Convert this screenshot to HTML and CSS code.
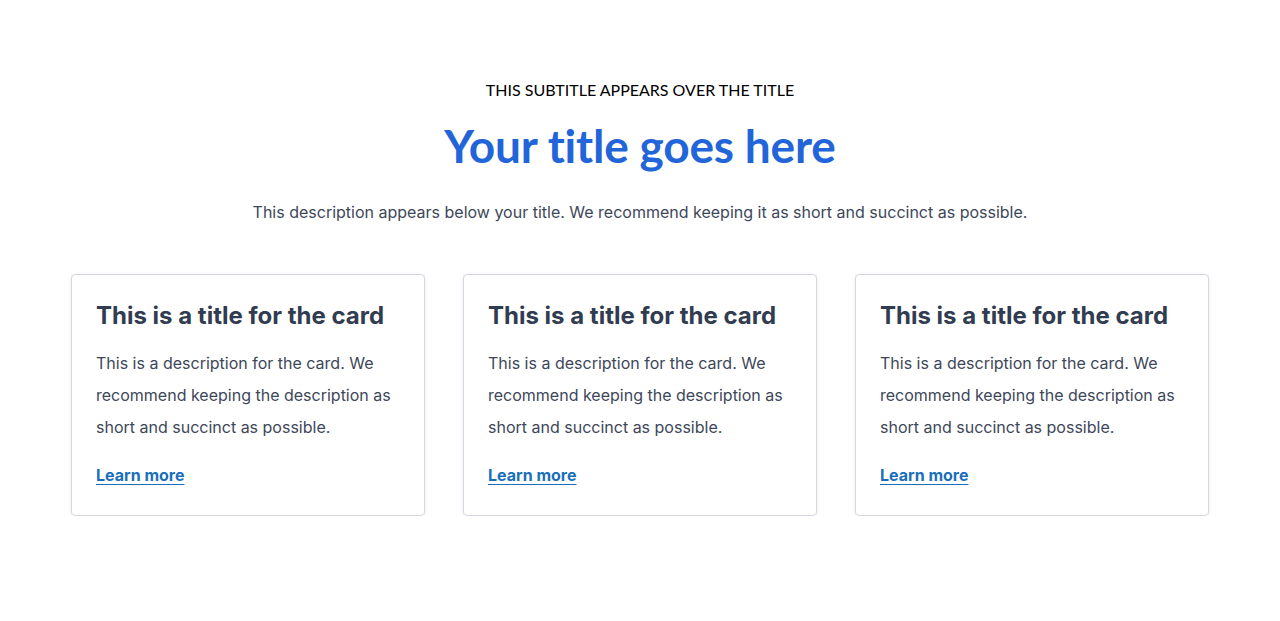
FILE: index.html
```html
<!DOCTYPE html>
<html>
<head>
<meta charset="utf-8">
<link rel="stylesheet" href="styles.css">
</head>
<body>
<section class="section">
  <header class="head">
    <p class="eyebrow">THIS SUBTITLE APPEARS OVER THE TITLE</p>
    <h1 class="title">Your title goes here</h1>
    <p class="lead">This description appears below your title. We recommend keeping it as short and succinct as possible.</p>
  </header>
  <div class="cards">
    <article class="card">
      <h2 class="card-title">This is a title for the card</h2>
      <p class="card-text">This is a description for the card. We recommend keeping the description as short and succinct as possible.</p>
      <a class="card-link" href="#">Learn more</a>
    </article>
    <article class="card">
      <h2 class="card-title">This is a title for the card</h2>
      <p class="card-text">This is a description for the card. We recommend keeping the description as short and succinct as possible.</p>
      <a class="card-link" href="#">Learn more</a>
    </article>
    <article class="card">
      <h2 class="card-title">This is a title for the card</h2>
      <p class="card-text">This is a description for the card. We recommend keeping the description as short and succinct as possible.</p>
      <a class="card-link" href="#">Learn more</a>
    </article>
  </div>
</section>
</body>
</html>
```
FILE: styles.css
```css
* { box-sizing: border-box; }
html, body { margin: 0; padding: 0; background: #fff; }
body { font-family: Inter, "Liberation Sans", sans-serif; color: #33415c; }
.section { padding: 80px 71px 0; }
.head { text-align: center; }
.eyebrow {
  margin: 0;
  font-family: Lato, sans-serif;
  font-size: 16px;
  line-height: 20px;
  color: #000;
  font-weight: 400;
}
.title {
  margin: 18px 0 0;
  font-family: Lato, sans-serif;
  font-weight: 700;
  font-size: 46px;
  line-height: 56px;
  color: #2265d9;
  letter-spacing: -0.2px;
}
.lead {
  margin: 26px 0 0;
  font-size: 16px;
  line-height: 24px;
  color: #3d4759;
}
.cards {
  margin-top: 50px;
  display: grid;
  grid-template-columns: repeat(3, 354px);
  gap: 38px;
}
.card {
  border: 1px solid #d6d6e0;
  border-radius: 4px;
  padding: 25px 24px 28px;
  height: 242px;
  box-shadow: 0 1px 4px rgba(0,0,0,0.07);
}
.card-title {
  margin: 0;
  font-size: 24px;
  line-height: 32px;
  font-weight: 700;
  color: #313c50;
}
.card-text {
  margin: 15px 0 0;
  font-size: 16px;
  line-height: 32px;
  color: #3d4759;
}
.card-link {
  display: inline-block;
  margin-top: 20px;
  font-size: 16px;
  line-height: 24px;
  font-weight: 700;
  color: #1a6fbb;
  text-decoration: underline;
  text-underline-offset: 3px;
}
```
